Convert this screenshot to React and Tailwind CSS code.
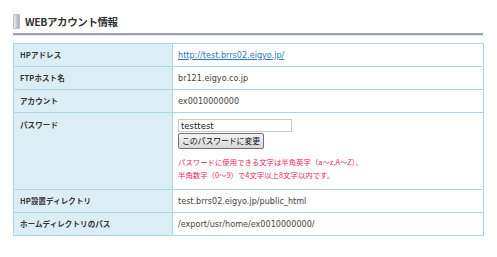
import React from 'react'

const rows = [
  { label: 'HPアドレス', value: 'http://test.brrs02.eigyo.jp/', link: true },
  { label: 'FTPホスト名', value: 'br121.eigyo.co.jp' },
  { label: 'アカウント', value: 'ex0010000000' },
  { label: 'パスワード', password: true },
  { label: 'HP設置ディレクトリ', value: 'test.brrs02.eigyo.jp/public_html' },
  { label: 'ホームディレクトリのパス', value: '/export/usr/home/ex0010000000/' },
]

const latin = { fontFamily: '"DejaVu Sans", "Noto Sans CJK JP", sans-serif' }
const jp = { fontFamily: '"Noto Sans CJK JP", "DejaVu Sans", sans-serif' }

const App = () => {
  return (
    <div className="w-[497px] h-[257px] bg-white pt-[14px] pl-[13px]">
      {/* heading */}
      <div className="w-[470px]">
        <div className="flex items-center h-[15px] gap-[5px]">
          <span className="w-[7px] h-[15px] border border-[#b9bcc4] bg-gradient-to-r from-[#eef0f3] via-[#c9ccd3] to-[#a7abb5] rounded-[1px]" />
          <h2 className="text-[10.5px] font-bold text-[#333] leading-none tracking-[-0.4px] mt-[1px]" style={jp}>
            WEBアカウント情報
          </h2>
        </div>
        <div className="mt-[4px] h-[2px] bg-[#9a9fad]" />
        <div className="h-px bg-[#e3e5ea]" />
      </div>

      {/* table */}
      <table className="mt-[7px] w-[471px] border-collapse border border-[#a9d6e8]">
        <tbody>
          {rows.map((r) => (
            <tr key={r.label}>
              <th
                className={`w-[159px] bg-[#dbeef6] border border-[#a9d6e8] pl-[6px] text-left text-[7.5px] font-bold text-[#333] tracking-[0.1px] ${r.password ? 'align-top pt-[6px] h-[77px]' : 'h-[23px]'}`}
                style={jp}
              >
                {r.label}
              </th>
              <td
                className={`border border-[#a9d6e8] pl-[5px] text-[8.1px] text-[#444] ${r.password ? 'align-top pt-[6px]' : ''}`}
                style={latin}
              >
                {r.password ? (
                  <div className="flex flex-col items-start">
                    <input
                      defaultValue="testtest"
                      className="w-[114px] h-[13px] border border-[#c8c8c8] px-[2px] text-[8.5px] text-[#222] bg-white outline-none"
                      style={latin}
                    />
                    <button
                      className="mt-[1px] h-[16px] px-[3px] border border-[#707070] rounded-[2px] bg-gradient-to-b from-[#f4f4f4] to-[#d8d8d8] text-[8px] text-[#111] leading-none tracking-[-0.2px]"
                      style={jp}
                    >
                      このパスワードに変更
                    </button>
                    <p className="mt-[6px] text-[7.4px] leading-[13px] text-[#e6285c]" style={jp}>
                      パスワードに使用できる文字は半角英字（a～z,A～Z）、<br />
                      半角数字（0～9）で4文字以上8文字以内です。
                    </p>
                  </div>
                ) : r.link ? (
                  <a href="#" className="text-[#2a78b8] underline">{r.value}</a>
                ) : (
                  r.value
                )}
              </td>
            </tr>
          ))}
        </tbody>
      </table>
    </div>
  )
}

export default App
